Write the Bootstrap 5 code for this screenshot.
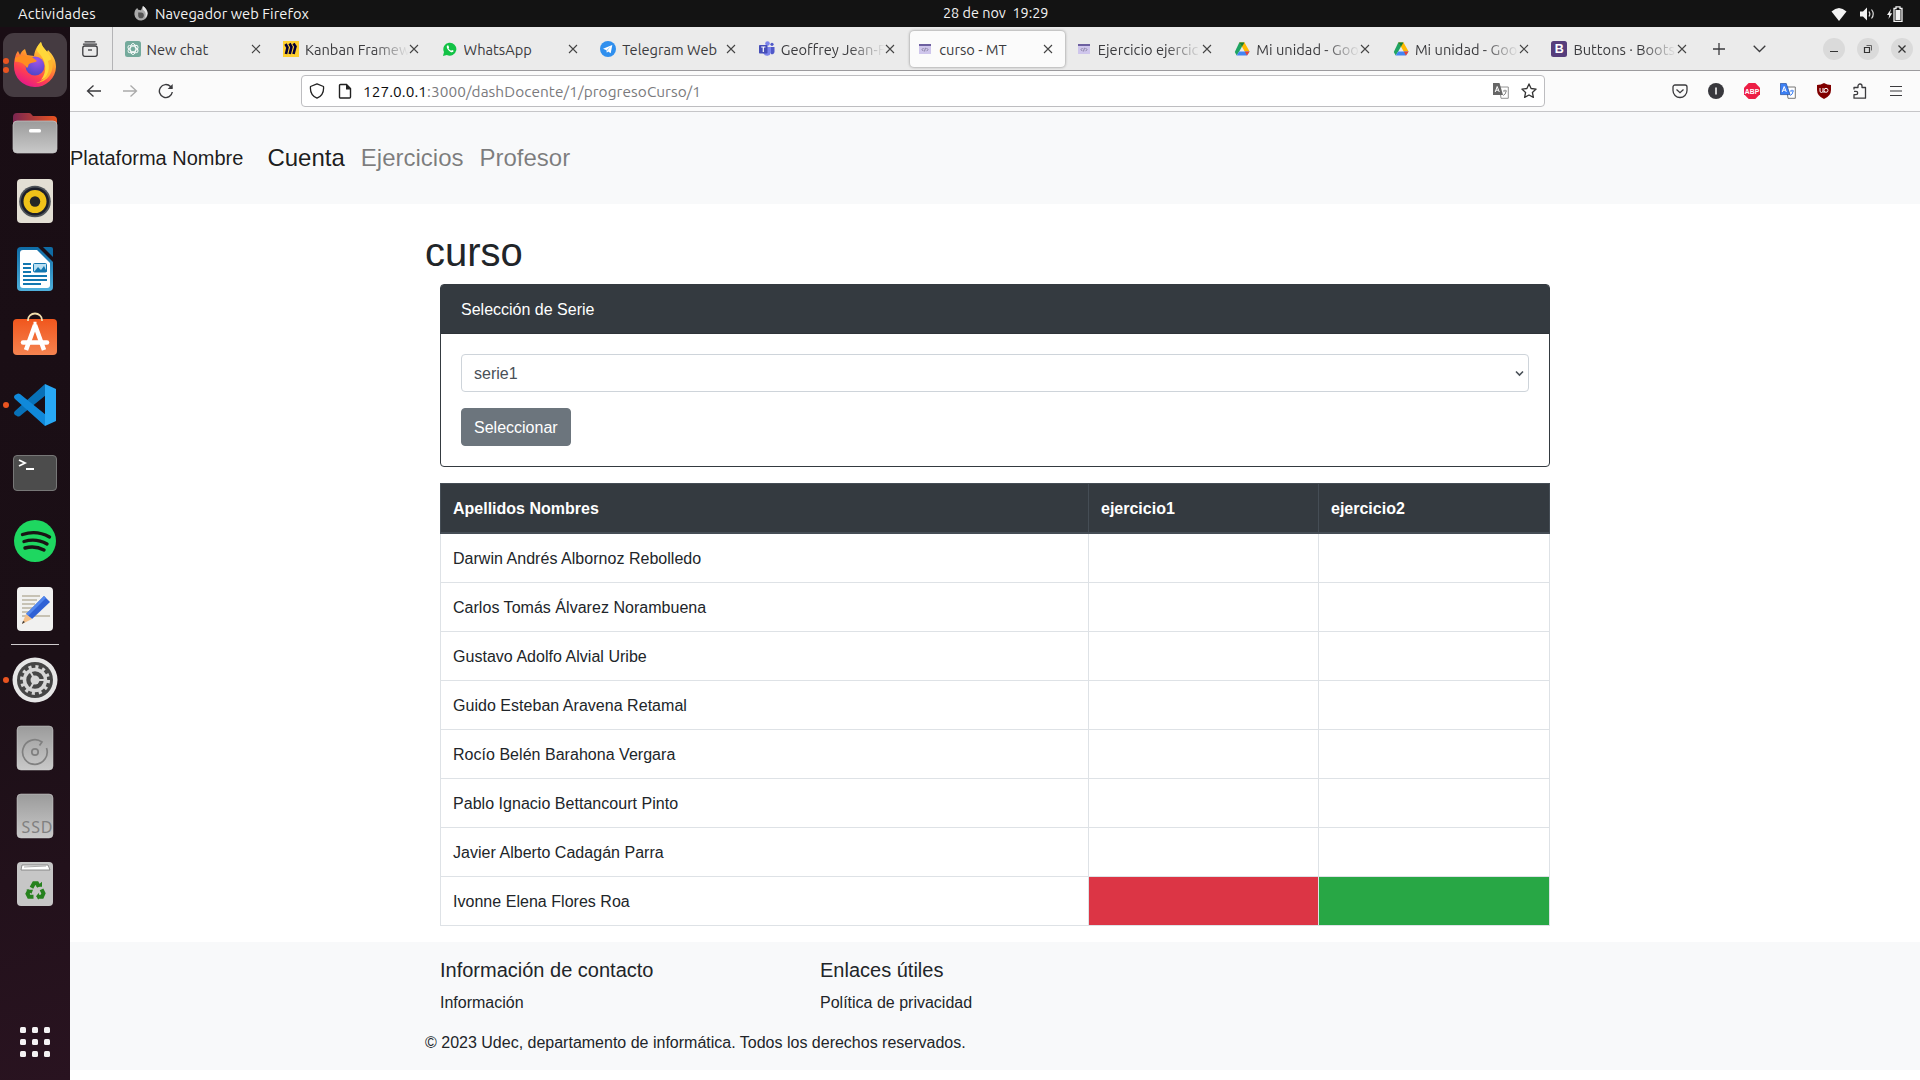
<!DOCTYPE html>
<html lang="es">
<head>
<meta charset="utf-8">
<title>curso - MT</title>
<link href="https://cdn.jsdelivr.net/npm/bootstrap@5.3.0/dist/css/bootstrap.min.css" rel="stylesheet">
<style>
html,body{height:100%;overflow:hidden}
body{font-family:"Liberation Sans",Arial,sans-serif;color:#212529;font-size:16px;line-height:1.5;background:#fff}
svg{display:block;flex:none}
.desktop{width:1920px;height:1080px}
.ui{font-family:Ubuntu,"Noto Sans",sans-serif;font-size:14.667px}
.topbar{height:27px;background:#131313;color:#f2f2f2;display:grid;grid-template-columns:943px auto 1fr;line-height:27px}
.activities{margin-left:18px;width:115px;letter-spacing:.22px}
.clock{font-size:14.4px;line-height:26px}
.dock{width:70px;background:linear-gradient(165deg,#190d14 0%,#1b0f16 60%,#291320 100%);padding-top:4px}
.dock-item{height:68px;width:70px;position:relative}
.dock-item.on::before{content:"";position:absolute;left:3px;top:2px;width:64px;height:64px;border-radius:11px;background:#453b41}
.dock-item svg{position:relative}
.dot{position:absolute;left:3px;width:6px;height:6px;border-radius:50%;background:#e95420}
.dock-sep{width:48px;height:1px;margin:1px auto;background:#cfcbcd}
.tabstrip{height:44px;background:#ebebeb;border-bottom:1px solid #9c9b9e}
.view-btn{width:43px;border-right:1px solid #b4b4b6}
.ff-tab{width:158.56px;padding:4px 2px 3px}
.ff-tab>div{height:36px;border-radius:4px;padding:0 7px;width:154.5px}
.ff-tab>.sel{background:#fbfbfb;box-shadow:0 0 3px rgba(0,0,0,.45)}
.ff-title{width:104px;margin-left:6px;white-space:nowrap;overflow:hidden;color:#3b3b3e;line-height:36px;padding-top:1px;height:37px}
.ff-title.fade-end{-webkit-mask-image:linear-gradient(90deg,#000 68px,transparent 104px);mask-image:linear-gradient(90deg,#000 68px,transparent 104px)}
.toolbar-ff{height:41px;background:#fbfbfb;border-bottom:1px solid #c6c6c8}
.urlbar{width:1244px;height:32px;border:1px solid #bdbdc0;border-radius:4px;background:#fff;margin-left:127px}
.url-text{font-size:15.4px;letter-spacing:.07px;color:#7a7a7d;padding-top:2px}
.url-text b{font-weight:400;color:#0c0c0d}
.win-btn{width:22px;height:22px;border-radius:50%;background:#dadada}
.site-nav{height:92px;background:#f8f9fa;padding:0}
.site-nav .navbar-brand{font-size:20px;color:rgba(0,0,0,.9);margin-right:16px}
.site-nav .nav-link{font-size:24px;padding:8px;color:rgba(0,0,0,.5)}
.site-nav .nav-link.active{color:rgba(0,0,0,.9)}
.page-col{width:1140px;margin:0 auto}
.page-col h1{font-size:40px;line-height:48px;margin:0 0 8px}
.inner{padding:0 15px}
.serie-card{border:1px solid #343a40;border-radius:4px;margin-bottom:16px}
.serie-card .card-header{background:#343a40;color:#fff;padding:13px 20px 11px;border-bottom:1px solid #2e3338;border-radius:2px 2px 0 0}
.serie-card .card-body{padding:20px}
.serie-card .form-select{height:38px;border:1px solid #ced4da;border-radius:4px;color:#495057;margin-bottom:16px;background-image:none;padding-top:7px;padding-bottom:5px}
.select-wrap{position:relative}
.select-wrap svg{position:absolute;right:5px;top:16px}
.btn-serie{background:#6c757d;color:#fff;border-radius:4px;padding-top:7px;padding-bottom:5px}
.prog-table{table-layout:fixed;width:1110px;margin-bottom:16px;border-collapse:collapse;border-color:#dee2e6}
.prog-table>:not(caption)>*>*{padding:13px 12px 11px;border:1px solid #dee2e6;height:49px}
.prog-table>tbody td{letter-spacing:.03px}
.prog-table>thead>tr>th{background:#343a40;color:#fff;border-color:#454d55;border-bottom:2px solid #454d55;padding:13px 12px 10.5px}
.prog-table>tbody>tr>td.fail{background:#dc3545}
.prog-table>tbody>tr>td.pass{background:#28a745}
.site-footer{background:#f8f9fa;height:128px;padding:16px 0}
.site-footer h5{font-size:20px;line-height:24px;margin:0 0 9px}
.site-footer p{margin:0 0 16px}
.foot-col{width:380px;padding-left:15px}
</style>
<script src="https://cdn.jsdelivr.net/npm/bootstrap@5.3.0/dist/js/bootstrap.bundle.min.js"></script>
</head>
<body>
<svg width="0" height="0" class="position-absolute">
<defs>
<linearGradient id="ffo" x1=".8" y1="0" x2=".3" y2="1"><stop offset="0" stop-color="#fff44f"/><stop offset=".4" stop-color="#ff9a2b"/><stop offset=".72" stop-color="#ff4050"/><stop offset="1" stop-color="#e3168c"/></linearGradient>
<radialGradient id="ffp" cx=".6" cy=".2" r=".8"><stop offset="0" stop-color="#a155e8"/><stop offset="1" stop-color="#5046c8"/></radialGradient>
<linearGradient id="gry" x1="0" y1="0" x2="0" y2="1"><stop offset="0" stop-color="#9b9b9b"/><stop offset="1" stop-color="#c9c9c9"/></linearGradient>
<linearGradient id="fld" x1="0" y1="0" x2="1" y2="0"><stop offset="0" stop-color="#7a2550"/><stop offset="1" stop-color="#e95420"/></linearGradient>
<linearGradient id="wrt" x1="0" y1="0" x2="0" y2="1"><stop offset="0" stop-color="#0e6ba5"/><stop offset="1" stop-color="#4fb0dc"/></linearGradient>
<linearGradient id="sft" x1="0" y1="0" x2="0" y2="1"><stop offset="0" stop-color="#f0561d"/><stop offset="1" stop-color="#f58350"/></linearGradient>
<symbol id="x" viewBox="0 0 10 10"><path d="M1 1l8 8M9 1L1 9" stroke="#444" stroke-width="1.1" fill="none"/></symbol>
<symbol id="drive" viewBox="0 0 16 16"><path d="M5.3 1.5h5L5.2 10.4l-2.5 4.2L.8 11z" fill="#1fa463"/><path d="M5.3 1.5h5.2L15.6 10.4h-4.9L8 5.800z" fill="#ffba00"/><path d="M5.200 10.400H15.600L13 14.600H2.700z" fill="#4285f4"/><path d="M10.700 10.400h4.900L13 14.600z" fill="#ea4335"/><path d="M8 5.800L5.300 1.500h2.700l2.500 0z" fill="#188038"/></symbol>
<symbol id="site" viewBox="0 0 16 16"><rect x="2" y="3" width="12" height="10" rx=".6" fill="#cfc6ec"/><rect x="2" y="3" width="12" height="2" fill="#6d60a0"/><path d="M6.500 7l-1.500 1.700 1.500 1.500M9.500 7l1.500 1.700-1.500 1.500M8.500 6.800l-1 3.600" stroke="#77708f" stroke-width=".8" fill="none"/></symbol>
</defs>
</svg>
<div class="desktop d-flex flex-column">
<header class="topbar ui">
  <div class="d-flex align-items-center">
    <span class="activities">Actividades</span>
    <svg width="16" height="16" viewBox="0 0 16 17"><path d="M1 8C1 5 2.500 3 4 2l1 2 3 .5L10 0c3 2 5 5 5 8a7 7 0 0 1-14 1z" fill="#aaa"/><path d="M5 7h3a3 3 0 1 1-3 3z" fill="#555"/><path d="M10 0c3 2 5 5 5 8a7 7 0 0 1-3 5c2-4 1-7-2-9z" fill="#e6e6e6"/></svg>
    <span style="margin-left:6px;letter-spacing:.05px">Navegador web Firefox</span>
  </div>
  <div class="clock">28 de nov&nbsp; 19:29</div>
  <div class="d-flex align-items-center justify-content-end" style="padding-right:17px">
    <svg width="16" height="16" viewBox="0 0 16 16"><path d="M.5 5.500Q8-1.500 15.500 5.500L8 15z" fill="#f2f2f2"/></svg>
    <svg style="margin-left:10px" width="20" height="16" viewBox="0 0 20 16"><path d="M3 5.500h3l4-4v13l-4-4H3z" fill="#f2f2f2"/><path d="M12 5.500q1.700 2.500 0 5M14.500 3.500q3.500 4.500 0 9" stroke="#ddd" stroke-width="1.200" fill="none"/></svg>
    <svg style="margin-left:9px" width="17" height="16" viewBox="0 0 17 16"><path d="M5 3L1 9h2.200L2.500 13l3.700-5.800H4z" fill="#f2f2f2"/><path d="M8 2.500h2V.8h4v1.700h2v13H8z" fill="none" stroke="#f2f2f2" stroke-width="1.300"/><path d="M9.500 4h5v10h-5z" fill="#f2f2f2"/></svg>
  </div>
</header>
<div class="d-flex flex-grow-1">
<aside class="dock d-flex flex-column flex-shrink-0">
  <div class="dock-item on d-flex align-items-center justify-content-center"><i class="dot" style="top:27px"></i><i class="dot" style="top:36px"></i>
    <svg width="48" height="48" viewBox="0 1 48 48"><path d="M3 26c0-7 2-13 4-15l2 4c1-3 3-5 5-6l2 6 7 1C24 9 27 5 30 2c1 5 4 7 6 10l1-2c5 5 8 10 8 17a21 20.500 0 0 1-42-1z" fill="url(#ffo)"/><path d="M27 12c-3-3 1-8 3-10 1 6 6 8 9 14 5 11-1 21-9 24 7-9 5-20-3-28z" fill="#ffd83a"/><path d="M41 19c3 13-4 23-16 24 10-3 15-11 12-22z" fill="#ffb52e"/><circle cx="24" cy="26" r="9.500" fill="url(#ffp)"/><path d="M4 18c4-2 8-3 11-2l6 1 5 4c-2 2-5 1-8 3-1 1 0 2-2 4-3-5-8-7-12-6z" fill="#ff8d20"/></svg></div>
  <div class="dock-item d-flex align-items-center justify-content-center">
    <svg width="48" height="48" viewBox="0 0 48 48"><path d="M2 8q0-4 4-4h12q2 0 3 2l1 1h20q4 0 4 4v12H2z" fill="url(#fld)"/><rect x="2" y="12" width="44" height="32" rx="4" fill="url(#gry)" stroke="#c5c5c5" stroke-width=".7"/><rect x="18" y="20" width="12" height="3.500" rx="1.500" fill="#fff"/></svg></div>
  <div class="dock-item d-flex align-items-center justify-content-center">
    <svg width="48" height="48" viewBox="0 0 48 48"><rect x="6" y="2" width="36" height="44" rx="4" fill="#e3dfd4"/><circle cx="24" cy="24.500" r="15.800" fill="#4e5358"/><circle cx="24" cy="24.500" r="14" fill="#1c1f2b"/><circle cx="24" cy="24.500" r="11.500" fill="#f0c219"/><circle cx="24" cy="24.500" r="5.200" fill="#252525"/></svg></div>
  <div class="dock-item d-flex align-items-center justify-content-center">
    <svg width="48" height="48" viewBox="0 0 48 48"><path d="M10 2h17l15 15v25q0 4-4 4H10q-4 0-4-4V6q0-4 4-4z" fill="url(#wrt)"/><path d="M12 5h14l13 13v22q0 3-3 3H12q-3 0-3-3V8q0-3 3-3z" fill="#fff"/><path d="M32 2h8q2 0 2 2v8z" fill="#0f6ca5"/><path d="M12 19h8M12 23h8M12 27h8M12 31h24M12 35h24M12 39h18" stroke="#1277b0" stroke-width="2"/><rect x="22.500" y="18.500" width="13" height="8.500" rx="1" fill="#b9e0f3" stroke="#1277b0"/><path d="M23 27l4-5 3 3 3-4 3 6z" fill="#1277b0"/></svg></div>
  <div class="dock-item d-flex align-items-center justify-content-center">
    <svg width="48" height="50" viewBox="0 0 48 50"><rect x="2" y="7" width="44" height="36" rx="4" fill="url(#sft)"/><path d="M17 9V8a7 6.500 0 0 1 14 0v1" fill="none" stroke="#f3dfae" stroke-width="1.800"/><path d="M22.500 12h3M24 13l-9 25M24 13l9 25" stroke="#fff" stroke-width="4.500"/><path d="M12 30.500h24" stroke="#fff" stroke-width="4.500" stroke-linecap="round"/></svg></div>
  <div class="dock-item d-flex align-items-center justify-content-center"><i class="dot" style="top:31px"></i>
    <svg width="48" height="48" viewBox="0 0 48 48"><path d="M34 3L4 30q-2 2 0 4l2 1q1 1 3 0L35 14z" fill="#0871b8"/><path d="M34 45L4 18q-2-2 0-4l2-1q1-1 3 0L35 34z" fill="#1089da"/><path d="M34 3l11 5v32l-11 5z" fill="#28a8f5"/></svg></div>
  <div class="dock-item d-flex align-items-center justify-content-center">
    <svg width="48" height="48" viewBox="0 0 48 48"><rect x="2.500" y="6.500" width="43" height="35" rx="3.500" fill="#4c4c4c" stroke="#777"/><path d="M8 11l6 3-6 3M15 20h8" fill="none" stroke="#fff" stroke-width="1.800"/></svg></div>
  <div class="dock-item d-flex align-items-center justify-content-center">
    <svg width="48" height="48" viewBox="0 0 48 48"><circle cx="24" cy="24" r="21" fill="#1ed760"/><path d="M11.500 17.500c9-3 19-2 27 2.500M13 24.500c8-2.500 16-1.500 23 2.500M14 31c7-2 13-1.200 19 2" fill="none" stroke="#191414" stroke-width="3.400" stroke-linecap="round"/></svg></div>
  <div class="dock-item d-flex align-items-center justify-content-center">
    <svg width="48" height="48" viewBox="0 0 48 48"><rect x="6" y="2" width="36" height="44" rx="4" fill="#f1f1f0"/><path d="M11 11h18M11 15h15M11 19h13M11 23h12M11 27h12M11 31h28" stroke="#c7c2b4" stroke-width="1.800"/><path d="M33 11l6 6-18 17-6-5z" fill="#2f61d5"/><path d="M33 11l2 2-18 18-2-2z" fill="#5287ee"/><path d="M15 29l6 5-10 5z" fill="#f4c08a"/><path d="M12 36l2 1-3 2z" fill="#333"/></svg></div>
  <div class="dock-sep"></div>
  <div class="dock-item d-flex align-items-center justify-content-center"><i class="dot" style="top:31px"></i>
    <svg width="48" height="48" viewBox="0 0 48 48"><circle cx="24" cy="24" r="22.500" fill="#e6e6e6"/><circle cx="24" cy="24" r="18" fill="#464646"/><circle cx="24" cy="24" r="13" fill="none" stroke="#d6d6d6" stroke-width="4" stroke-dasharray="3 3.807"/><circle cx="24" cy="24" r="10.500" fill="none" stroke="#d6d6d6" stroke-width="3.500"/><circle cx="24" cy="24" r="4.500" fill="#d6d6d6"/><path d="M24 24h10M24 24l-5-9M24 24l-5 9" stroke="#d6d6d6" stroke-width="2"/></svg></div>
  <div class="dock-item d-flex align-items-center justify-content-center">
    <svg width="48" height="48" viewBox="0 0 48 48"><rect x="6" y="2" width="36" height="44" rx="4" fill="url(#gry)" stroke="#d0d0d0" stroke-width=".5"/><path d="M35.500 24a12.300 12.300 0 1 1-4.500-6l-2.500 3.500" fill="none" stroke="#808080" stroke-width="1.700"/><circle cx="24" cy="28" r="3.200" fill="none" stroke="#808080" stroke-width="1.700"/></svg></div>
  <div class="dock-item d-flex align-items-center justify-content-center">
    <svg width="48" height="48" viewBox="0 0 48 48"><rect x="6" y="2" width="36" height="44" rx="4" fill="url(#gry)" stroke="#d0d0d0" stroke-width=".5"/><text x="10.500" y="41" font-family="Noto Sans" font-size="16" textLength="31" fill="#808080">SSD</text></svg></div>
  <div class="dock-item d-flex align-items-center justify-content-center">
    <svg width="48" height="48" viewBox="0 0 48 48"><rect x="6" y="2" width="36" height="44" rx="4" fill="#c6c6c6"/><path d="M10 10l1-5h26l2 5z" fill="#fff" stroke="#777" stroke-width=".8"/><path d="M13 7l22-1" stroke="#aaa"/><g transform="translate(0 .8)"><g fill="none" stroke="#26811e" stroke-width="4"><path d="M20.500 27l2.500-4.500h3l2 3.500"/><path d="M30.500 28.500l2 4-1.500 3.500h-4.500"/><path d="M22.500 36h-4.500l-1.500-3 2-4"/></g><path d="M25 26h6v-5zM28 32v7l-3-3.500zM15 29h7l-1.500 4z" fill="#26811e"/></g></svg></div>
  <div class="mt-auto d-flex justify-content-center" style="padding-bottom:23px">
    <svg width="30" height="30" viewBox="0 0 30 30" fill="#f4f2f3"><rect width="6" height="6" rx="1.500"/><rect x="12" width="6" height="6" rx="1.500"/><rect x="24" width="6" height="6" rx="1.500"/><rect y="12" width="6" height="6" rx="1.500"/><rect x="12" y="12" width="6" height="6" rx="1.500"/><rect x="24" y="12" width="6" height="6" rx="1.500"/><rect y="24" width="6" height="6" rx="1.500"/><rect x="12" y="24" width="6" height="6" rx="1.500"/><rect x="24" y="24" width="6" height="6" rx="1.500"/></svg></div>
</aside>
<div class="flex-grow-1 d-flex flex-column">
  <div class="tabstrip ui d-flex">
    <div class="view-btn d-flex align-items-center" style="padding-left:12px"><svg width="16" height="16" viewBox="0 0 16 16" fill="none" stroke="#3b3b3e" stroke-width="1.300"><path d="M3 .8h10M1.500 3.200h13" stroke-linecap="round"/><rect x=".8" y="5" width="14.400" height="10.300" rx="2"/><path d="M6 9h4"/></svg></div>
    <div class="d-flex" style="padding-left:2.500px">
      <div class="ff-tab"><div class="d-flex align-items-center"><svg width="16" height="16" viewBox="0 0 16 16"><rect width="16" height="16" rx="2.500" fill="#74aa9c"/><g fill="none" stroke="#fff" stroke-width=".9"><ellipse cx="8" cy="8" rx="2.800" ry="5.500"/><ellipse cx="8" cy="8" rx="2.800" ry="5.500" transform="rotate(60 8 8)"/><ellipse cx="8" cy="8" rx="2.800" ry="5.500" transform="rotate(120 8 8)"/></g></svg><span class="ff-title">New chat</span><svg width="10" height="10"><use href="#x"/></svg></div></div>
      <div class="ff-tab"><div class="d-flex align-items-center"><svg width="16" height="16" viewBox="0 0 16 16"><rect width="16" height="16" fill="#ffd02f"/><path d="M2.500 3l2 3.500L3 13M6.500 2.500L8.500 6l-1.800 7M10.500 2.500L12.500 5.500 10.500 13" stroke="#050038" stroke-width="2.600" fill="none"/></svg><span class="ff-title fade-end">Kanban Framew</span><svg width="10" height="10"><use href="#x"/></svg></div></div>
      <div class="ff-tab"><div class="d-flex align-items-center"><svg width="16" height="16" viewBox="0 0 16 16"><path d="M1 15l1-4a6.500 6.500 0 1 1 2.800 2.900z" fill="#12c245"/><path d="M5.200 4.500c-.8 1-.5 2.500.8 4.200 1.500 1.900 3.500 3 4.800 2.400 1-.6.900-1.300.5-1.500L10 8.900l-.8.900C8 9.300 7 8.400 6.500 7.300l.6-.8L6.400 4.500z" fill="#fff"/></svg><span class="ff-title">WhatsApp</span><svg width="10" height="10"><use href="#x"/></svg></div></div>
      <div class="ff-tab"><div class="d-flex align-items-center"><svg width="16" height="16" viewBox="0 0 16 16"><circle cx="8" cy="8" r="8" fill="#2f8fee"/><path d="M3 7.800L12.300 4l-1.600 8.300-2.500-1.900-1.400 1.300-.3-2.500z" fill="#fff"/><path d="M6.500 9.200l4-3.700-3.200 4.200z" fill="#7db9f4"/></svg><span class="ff-title">Telegram Web</span><svg width="10" height="10"><use href="#x"/></svg></div></div>
      <div class="ff-tab"><div class="d-flex align-items-center"><svg width="16" height="16" viewBox="0 0 16 16"><circle cx="8.500" cy="2.500" r="2.300" fill="#7b83eb"/><circle cx="13" cy="3.300" r="1.600" fill="#5059c9"/><path d="M11 6h4.500v5a2.500 2.500 0 0 1-3.500 2z" fill="#5059c9"/><path d="M4.500 6H12v5.500a4 4 0 0 1-7.500 1z" fill="#7b83eb"/><rect y="4" width="8.500" height="8.500" rx=".8" fill="#464eb8"/><path d="M2.200 6h4.200M4.300 6v5" stroke="#fff" stroke-width="1.200"/></svg><span class="ff-title fade-end">Geoffrey Jean-F</span><svg width="10" height="10"><use href="#x"/></svg></div></div>
      <div class="ff-tab"><div class="sel d-flex align-items-center"><svg width="16" height="16"><use href="#site"/></svg><span class="ff-title">curso - MT</span><svg width="10" height="10"><use href="#x"/></svg></div></div>
      <div class="ff-tab"><div class="d-flex align-items-center"><svg width="16" height="16"><use href="#site"/></svg><span class="ff-title fade-end">Ejercicio ejercic</span><svg width="10" height="10"><use href="#x"/></svg></div></div>
      <div class="ff-tab"><div class="d-flex align-items-center"><svg width="16" height="16"><use href="#drive"/></svg><span class="ff-title fade-end">Mi unidad - Goo</span><svg width="10" height="10"><use href="#x"/></svg></div></div>
      <div class="ff-tab"><div class="d-flex align-items-center"><svg width="16" height="16"><use href="#drive"/></svg><span class="ff-title fade-end">Mi unidad - Goo</span><svg width="10" height="10"><use href="#x"/></svg></div></div>
      <div class="ff-tab"><div class="d-flex align-items-center"><svg width="16" height="16" viewBox="0 0 16 16"><rect width="16" height="16" rx="2.500" fill="#563d7c"/><text x="3.700" y="12.300" font-family="Liberation Sans" font-weight="bold" font-size="12.500" fill="#fff">B</text></svg><span class="ff-title fade-end">Buttons · Boots</span><svg width="10" height="10"><use href="#x"/></svg></div></div>
    </div>
    <div class="d-flex align-items-center flex-grow-1" style="padding-left:12px">
      <svg width="12" height="12" viewBox="0 0 12 12"><path d="M6 0v12M0 6h12" stroke="#3b3b3e" stroke-width="1.300"/></svg>
      <svg style="margin-left:28px" width="13" height="8" viewBox="0 0 13 8"><path d="M.7.7l5.800 5.800L12.300.7" stroke="#3b3b3e" stroke-width="1.300" fill="none"/></svg>
      <div class="ms-auto d-flex" style="padding-right:7px;column-gap:12px">
        <span class="win-btn"><svg width="22" height="22"><path d="M7 13.500h8" stroke="#333"/></svg></span>
        <span class="win-btn"><svg width="22" height="22" fill="none" stroke="#333"><path d="M7.500 9.500h5v5h-5z" stroke-width="1.200"/><path d="M9.500 7.500h5v5" stroke="#666"/></svg></span>
        <span class="win-btn"><svg width="22" height="22"><path d="M7.500 7.500l7 7M14.500 7.500l-7 7" stroke="#333" stroke-width="1.300"/></svg></span>
      </div>
    </div>
  </div>
  <div class="toolbar-ff ui d-flex align-items-center">
    <div class="d-flex align-items-center" style="padding-left:16px;gap:20px">
      <svg width="16" height="16" viewBox="0 0 16 16" fill="none" stroke="#3b3b3e" stroke-width="1.300"><path d="M7.500 2.500L1.500 8l6 5.500M1.500 8H15"/></svg>
      <svg width="16" height="16" viewBox="0 0 16 16" fill="none" stroke="#aaa" stroke-width="1.300"><path d="M8.500 2.500L14.500 8l-6 5.500M14.500 8H1"/></svg>
      <svg width="16" height="16" viewBox="0 0 16 16" fill="none" stroke="#3b3b3e" stroke-width="1.400"><path d="M14.300 9A6.500 6.500 0 1 1 12.500 3.500L14 5"/><path d="M14.700 1v5h-5z" fill="#3b3b3e" stroke="none"/></svg>
    </div>
    <div class="urlbar d-flex align-items-center" style="padding:0 7px">
      <svg width="16" height="16" viewBox="0 0 16 16" fill="none" stroke="#222" stroke-width="1.300"><path d="M8 .8l6.500 2.700c.5 5-1.500 9.500-6.500 11.700C3 13 1 8.500 1.500 3.500z" stroke-linejoin="round"/></svg>
      <svg style="margin-left:12px" width="16" height="16" viewBox="0 0 16 16"><path d="M3.500 1.500h6l4 4v8.500a1 1 0 0 1-1 1h-9a1 1 0 0 1-1-1V2.500a1 1 0 0 1 1-1z" fill="none" stroke="#222" stroke-width="1.400"/><path d="M9 1v5.500h5z" fill="#222"/></svg>
      <span class="url-text" style="margin-left:10px"><b>127.0.0.1</b>:3000/dashDocente/1/progresoCurso/1</span>
      <svg class="ms-auto" width="16" height="16" viewBox="0 0 16 16"><path d="M6.500 4h8.800v11.300H8z" fill="#fff" stroke="#888" stroke-width=".9"/><path d="M10 8h4M12 6.700V8M10.200 12.500q2.500-1 2.800-4" stroke="#888" fill="none"/><path d="M0 0h6.500L10 12H0z" fill="#666"/><path d="M2.200 9L4.200 3.500 6.300 9M3 7.200h2.500" stroke="#fff" fill="none"/></svg>
      <svg style="margin-left:12px" width="16" height="16" viewBox="0 0 16 16" fill="none" stroke="#333" stroke-width="1.300" stroke-linejoin="round"><path d="M8 .9l2.100 4.600 5 .6-3.700 3.400 1 4.900L8 12l-4.400 2.400 1-4.900L.9 6.100l5-.6z"/></svg>
    </div>
    <div class="ms-auto d-flex align-items-center" style="padding-right:16px;gap:20px">
      <svg width="16" height="16" viewBox="0 0 16 16" fill="none" stroke="#3b3b3e" stroke-width="1.300"><path d="M3 2h10a2 2 0 0 1 2 2v3.500a7 7 0 0 1-14 0V4a2 2 0 0 1 2-2z"/><path d="M4.500 6.500L8 9.700l3.500-3.200"/></svg>
      <svg width="16" height="16" viewBox="0 0 16 16"><circle cx="8" cy="8" r="8" fill="#38383d"/><path d="M8 4.500v7" stroke="#fff" stroke-width="1.500"/></svg>
      <svg width="16" height="16" viewBox="0 0 16 16"><path d="M4.700 0h6.600L16 4.700v6.600L11.300 16H4.700L0 11.300V4.700z" fill="#ed1e45"/><text x=".8" y="10.700" textLength="14.400" lengthAdjust="spacingAndGlyphs" font-family="Liberation Sans" font-weight="bold" font-size="7.500" fill="#fff">ABP</text></svg>
      <svg width="16" height="16" viewBox="0 0 16 16"><path d="M6.500 4h8.800v11.300H8z" fill="#fff" stroke="#777" stroke-width="1"/><path d="M10 8h4M12 6.700V8M10.200 12.500q2.500-1 2.800-4" stroke="#3c80f5" fill="none"/><path d="M.4.4H6.200L10 11.600H.4z" fill="#3c80f5" stroke="#2a55a5" stroke-width=".8"/><path d="M2.200 9L4.200 3.500 6.300 9M3 7.200h2.500" stroke="#fff" fill="none"/></svg>
      <svg width="16" height="16" viewBox="0 0 16 16"><path d="M8 0q3 2 7 2v5q0 6-7 9Q1 13 1 7V2q4 0 7-2z" fill="#800000"/><path d="M4 5v3q0 1.500 1.500 1.500T7 8V5M7 9h2" stroke="#fff" fill="none"/><circle cx="10" cy="7.300" r="2" stroke="#fff" fill="none"/></svg>
      <svg width="16" height="16" viewBox="0 0 16 16" fill="none" stroke="#3b3b3e" stroke-width="1.300"><path d="M2 6.500V4.500h4V3a2 2 0 0 1 4 0v1.500h3.500v10.700H2v-3.500h2a1.700 1.700 0 0 0 0-3.400H2" stroke-linejoin="round"/></svg>
      <svg width="16" height="16" viewBox="0 0 16 16" stroke="#3b3b3e" stroke-width="1.200"><path d="M2 3.500h12M2 8h12M2 12.500h12"/></svg>
    </div>
  </div>
  <nav class="navbar navbar-expand site-nav flex-shrink-0">
    <a class="navbar-brand" href="#">Plataforma Nombre</a>
    <ul class="navbar-nav">
      <li class="nav-item"><a class="nav-link active" href="#">Cuenta</a></li>
      <li class="nav-item"><a class="nav-link" href="#">Ejercicios</a></li>
      <li class="nav-item"><a class="nav-link" href="#">Profesor</a></li>
    </ul>
  </nav>
  <main class="page-col pt-4">
    <h1>curso</h1>
    <div class="inner">
      <div class="card serie-card">
        <div class="card-header">Selección de Serie</div>
        <div class="card-body">
          <div class="select-wrap"><select class="form-select"><option>serie1</option></select><svg width="9" height="7" viewBox="0 0 9 7"><path d="M1 1.500l3.500 3.500L8 1.500" fill="none" stroke="#495057" stroke-width="1.600"/></svg></div>
          <button class="btn btn-secondary btn-serie">Seleccionar</button>
        </div>
      </div>
      <table class="table prog-table">
        <colgroup><col style="width:648px"><col style="width:230px"><col style="width:231px"></colgroup>
        <thead><tr><th>Apellidos Nombres</th><th>ejercicio1</th><th>ejercicio2</th></tr></thead>
        <tbody>
          <tr><td>Darwin Andrés Albornoz Rebolledo</td><td></td><td></td></tr>
          <tr><td>Carlos Tomás Álvarez Norambuena</td><td></td><td></td></tr>
          <tr><td>Gustavo Adolfo Alvial Uribe</td><td></td><td></td></tr>
          <tr><td>Guido Esteban Aravena Retamal</td><td></td><td></td></tr>
          <tr><td>Rocío Belén Barahona Vergara</td><td></td><td></td></tr>
          <tr><td>Pablo Ignacio Bettancourt Pinto</td><td></td><td></td></tr>
          <tr><td>Javier Alberto Cadagán Parra</td><td></td><td></td></tr>
          <tr><td>Ivonne Elena Flores Roa</td><td class="fail"></td><td class="pass"></td></tr>
        </tbody>
      </table>
    </div>
  </main>
  <footer class="site-footer">
    <div class="page-col">
      <div class="d-flex">
        <div class="foot-col"><h5>Información de contacto</h5><p>Información</p></div>
        <div class="foot-col"><h5>Enlaces útiles</h5><p>Política de privacidad</p></div>
      </div>
      <p class="mb-0">© 2023 Udec, departamento de informática. Todos los derechos reservados.</p>
    </div>
  </footer>
</div>
</div>
</div>
</body>
</html>
